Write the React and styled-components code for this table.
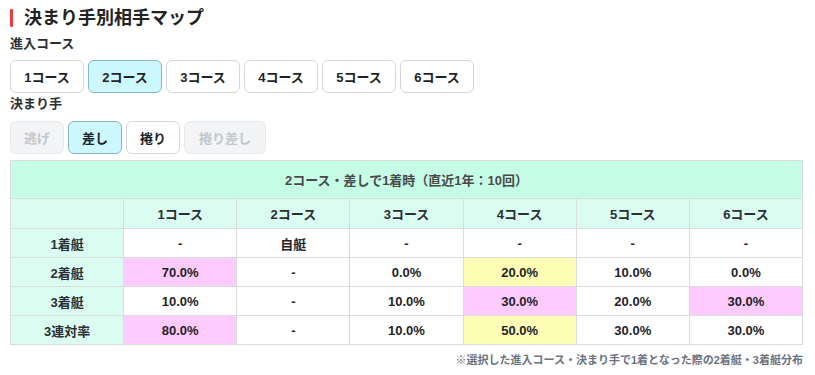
import React from "react";
import styled, { createGlobalStyle } from "styled-components";

const GlobalStyle = createGlobalStyle`
  body {
    margin: 0;
    background: #fff;
    font-family: "Liberation Sans", "Noto Sans CJK JP", sans-serif;
    color: #1f2328;
  }
`;

const Page = styled.div`
  padding: 6px 13px 0 10px;
`;

const Title = styled.h2`
  display: flex;
  align-items: center;
  gap: 11px;
  margin: 0;
  font-size: 18px;
  font-weight: 700;
  line-height: 24px;
  color: #222;
  &::before {
    content: "";
    width: 3px;
    height: 18px;
    background: #ef3b3b;
    border-radius: 1px;
  }
`;

const Label = styled.div`
  font-size: 13px;
  font-weight: 700;
  line-height: 18px;
  margin: ${(p) => p.$margin || "4px 0 7px"};
  color: #2b2f33;
`;

const ButtonRow = styled.div`
  display: flex;
  gap: 4px;
`;

const ChoiceButton = styled.button`
  box-sizing: border-box;
  height: 33px;
  width: ${(p) => p.$width || "auto"};
  padding: 0;
  border-radius: 6px;
  border: 1px solid ${(p) => (p.$active ? "#86b8c4" : p.$disabled ? "#e9eaec" : "#d5d7da")};
  background: ${(p) => (p.$active ? "#cdf8fd" : p.$disabled ? "#f3f4f6" : "#fff")};
  color: ${(p) => (p.$disabled ? "#c3c6cb" : "#1f2328")};
  font-family: inherit;
  font-size: 13px;
  font-weight: 700;
`;

const Table = styled.table`
  margin-top: 6px;
  width: 793px;
  border-collapse: collapse;
  table-layout: fixed;
  font-size: 13px;
  font-weight: 700;
  text-align: center;
  td, th {
    border: 1px solid #dcdcdc;
    padding: 0;
  }
`;

const Caption = styled.th`
  height: 37px;
  background: #c6fde6;
  color: #4a4a4a;
  font-weight: 700;
`;

const HeadCell = styled.th`
  height: 29px;
  background: #dafcf1;
  color: #2b2f33;
  font-weight: 700;
`;

const Cell = styled.td`
  height: 28px;
  background: ${(p) => (p.$tone === "pink" ? "#fdcbfd" : p.$tone === "yellow" ? "#fefdb5" : "#fff")};
  color: #1f2328;
`;

const RowHead = styled.td`
  height: 28px;
  background: #dafcf1;
  color: #2b2f33;
`;

const Note = styled.div`
  width: 793px;
  text-align: right;
  font-size: 11px;
  font-weight: 700;
  color: #6b7280;
  margin-top: 6px;
`;

const courses = ["1コース", "2コース", "3コース", "4コース", "5コース", "6コース"];

const kimarite = [
  { label: "逃げ", disabled: true, width: "54px" },
  { label: "差し", active: true, width: "54px" },
  { label: "捲り", width: "54px" },
  { label: "捲り差し", disabled: true, width: "82px" },
];

const rows = [
  { name: "1着艇", cells: [["-"], ["自艇"], ["-"], ["-"], ["-"], ["-"]] },
  { name: "2着艇", cells: [["70.0%", "pink"], ["-"], ["0.0%"], ["20.0%", "yellow"], ["10.0%"], ["0.0%"]] },
  { name: "3着艇", cells: [["10.0%"], ["-"], ["10.0%"], ["30.0%", "pink"], ["20.0%"], ["30.0%", "pink"]] },
  { name: "3連対率", cells: [["80.0%", "pink"], ["-"], ["10.0%"], ["50.0%", "yellow"], ["30.0%"], ["30.0%"]] },
];

export default function App() {
  return (
    <Page>
      <GlobalStyle />
      <Title>決まり手別相手マップ</Title>
      <Label $margin="5px 0 7px">進入コース</Label>
      <ButtonRow>
        {courses.map((c, i) => (
          <ChoiceButton key={c} $active={i === 1} $width="74px">
            {c}
          </ChoiceButton>
        ))}
      </ButtonRow>
      <Label $margin="2px 0 8px">決まり手</Label>
      <ButtonRow>
        {kimarite.map((k) => (
          <ChoiceButton key={k.label} $active={k.active} $disabled={k.disabled} $width={k.width}>
            {k.label}
          </ChoiceButton>
        ))}
      </ButtonRow>
      <Table>
        <thead>
          <tr>
            <Caption colSpan={7}>2コース・差しで1着時（直近1年：10回）</Caption>
          </tr>
          <tr>
            <HeadCell />
            {courses.map((c) => (
              <HeadCell key={c}>{c}</HeadCell>
            ))}
          </tr>
        </thead>
        <tbody>
          {rows.map((r) => (
            <tr key={r.name}>
              <RowHead>{r.name}</RowHead>
              {r.cells.map(([v, tone], i) => (
                <Cell key={i} $tone={tone}>
                  {v}
                </Cell>
              ))}
            </tr>
          ))}
        </tbody>
      </Table>
      <Note>※選択した進入コース・決まり手で1着となった際の2着艇・3着艇分布</Note>
    </Page>
  );
}
